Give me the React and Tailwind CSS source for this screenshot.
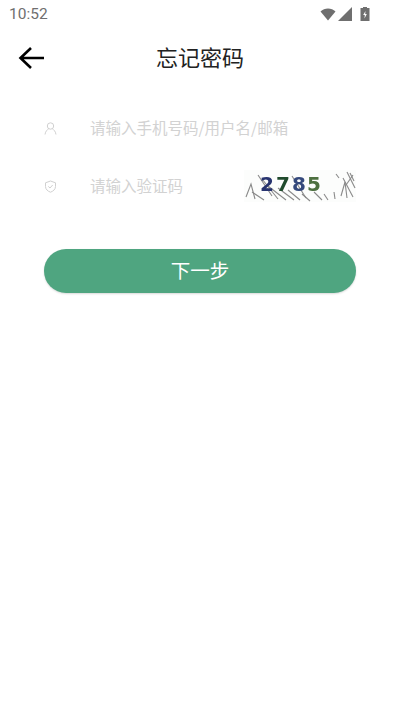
const cjk = { fontFamily: '"Noto Sans CJK SC", "Noto Sans", sans-serif' };

function Captcha() {
  const lines = [
    "M2 27 L7 14 L11 29","M8 22 L20 30","M14 5 L28 26","M18 9 L34 29","M24 16 L42 30","M34 18 L50 30","M44 20 L56 30","M48 6 L62 28","M58 24 L66 31",
    "M70 22 L78 30","M80 24 L84 30","M90 22 L91 29","M97 26 L101 12 L103 28","M99 8 L109 27","M103 2 L111 18","M106 3 L110 11","M102 15 L109 5","M92 4 L95 8",
  ];
  return (
    <div className="relative w-[112px] h-[32px] shrink-0 bg-[#fcfdfc] overflow-hidden">
      <svg viewBox="0 0 112 32" className="absolute inset-0 w-full h-full blur-[0.6px]">
        {lines.map((d, i) => <path key={i} d={d} fill="none" stroke="#8a8a8a" strokeWidth="1.1" />)}
      </svg>
      <div className="absolute left-[16px] top-[2px] flex font-bold text-[20px] leading-[24px] blur-[0.5px]" style={{ fontFamily: '"DejaVu Sans", sans-serif' }}>
        <span className="text-[#27336f] w-[16px]">2</span>
        <span className="text-[#1f4a2c] w-[16px]">7</span>
        <span className="text-[#34497c] w-[15px]">8</span>
        <span className="text-[#4d7040]">5</span>
      </div>
    </div>
  );
}

export default function App() {
  return (
    <div className="w-[400px] h-[711px] bg-white overflow-hidden" style={cjk}>
      <div className="h-[28px] flex items-center justify-between pl-[9px] pr-[30px]">
        <span className="text-[15.5px] text-[#6f6f6f] pt-[1px]" style={{ fontFamily: 'Roboto, sans-serif' }}>10:52</span>
        <div className="flex items-center gap-[2px]">
          <svg width="16" height="13" viewBox="0 0 16 13"><path d="M0.5 3.4 C4.5 -0.6 11.5 -0.6 15.5 3.4 L8 12.5 Z" fill="#6f6f6f" /></svg>
          <svg width="14" height="14" viewBox="0 0 14 14"><path d="M14 0 V14 H0 Z" fill="#6f6f6f" /></svg>
          <svg width="10" height="14" viewBox="0 0 10 14" className="ml-[6px]"><path d="M3 0 H7 V1 H9.5 V14 H0.5 V1 H3 Z" fill="#6f6f6f" /><path d="M5.5 4 L3.2 8 H4.8 L4.5 11.5 L6.8 7 H5.2 Z" fill="#fff" /></svg>
        </div>
      </div>
      <div className="h-[60px] flex items-center relative justify-center">
        <svg className="absolute left-[18px] top-[18px]" width="27" height="24" viewBox="0 0 27 24" fill="none" stroke="#000" strokeWidth="2.6"><path d="M26 12 H3 M13 2 L2.5 12 L13 22" /></svg>
        <span className="text-[22px] text-[#222] pb-[3px]">忘记密码</span>
      </div>
      <div className="mt-[11px] px-[44px]">
        <div className="h-[58px] flex items-center">
          <svg width="13" height="13" viewBox="0 0 13 13" fill="none" stroke="#d0d0d0" strokeWidth="1"><circle cx="6.5" cy="4" r="3.2" /><path d="M1 12.5 C1.5 9 3.5 7.5 4.5 7 M12 12.5 C11.5 9 9.5 7.5 8.5 7" /></svg>
          <span className="ml-[33px] text-[15.5px] text-[#d2d2d2]">请输入手机号码/用户名/邮箱</span>
        </div>
        <div className="h-[58px] flex items-center">
          <svg width="13" height="13" viewBox="0 0 13 13" fill="none" stroke="#d0d0d0" strokeWidth="1"><path d="M6.5 1 L11.5 2.8 V6.5 C11.5 9.5 9 11.3 6.5 12.2 C4 11.3 1.5 9.5 1.5 6.5 V2.8 Z" /><path d="M4.3 6.4 L6 8 L8.7 5" /></svg>
          <span className="ml-[33px] text-[15.5px] text-[#d2d2d2] flex-1">请输入验证码</span>
          <Captcha />
        </div>
        <button className="mt-[34px] w-full h-[44px] rounded-[22px] bg-[#4fa580] text-white text-[19.5px] pb-[2px] shadow-[0_1px_2px_rgba(0,0,0,0.15)]" style={cjk}>下一步</button>
      </div>
    </div>
  );
}
